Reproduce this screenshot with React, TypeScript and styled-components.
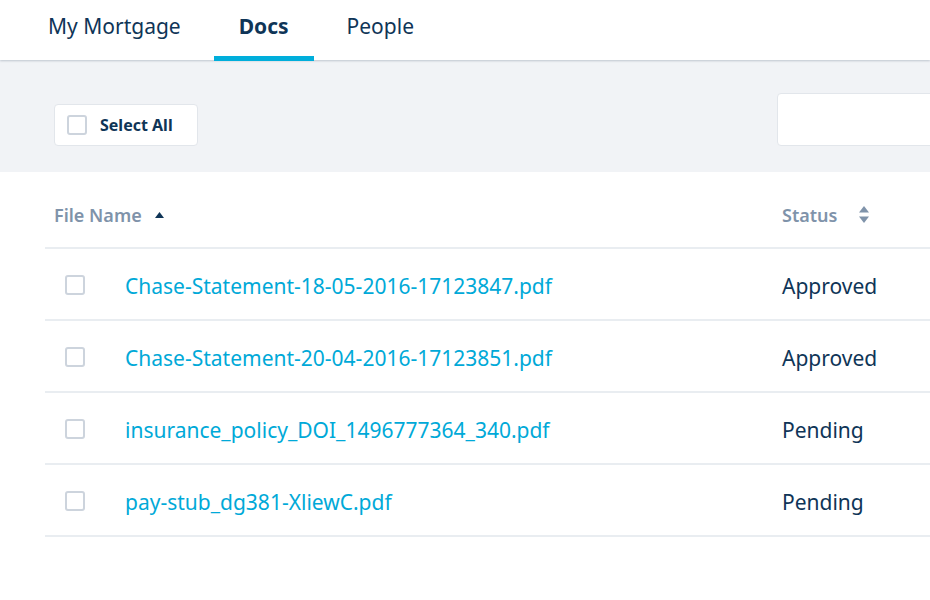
import React, { useState } from 'react';
import styled, { createGlobalStyle } from 'styled-components';

const GlobalStyle = createGlobalStyle`
  html, body {
    margin: 0;
    padding: 0;
    background: #ffffff;
    font-family: 'Noto Sans', 'Open Sans', sans-serif;
    overflow: hidden;
  }
`;

const docs = [
  { name: 'Chase-Statement-18-05-2016-17123847.pdf', status: 'Approved' },
  { name: 'Chase-Statement-20-04-2016-17123851.pdf', status: 'Approved' },
  { name: 'insurance_policy_DOI_1496777364_340.pdf', status: 'Pending' },
  { name: 'pay-stub_dg381-XliewC.pdf', status: 'Pending' },
];

const tabs = ['My Mortgage', 'Docs', 'People'];

const App: React.FC = () => {
  const [active, setActive] = useState('Docs');
  const [checked, setChecked] = useState<string[]>([]);

  const toggle = (name: string) => {
    setChecked((c) => (c.includes(name) ? c.filter((n) => n !== name) : [...c, name]));
  };

  const allChecked = checked.length === docs.length;

  return (
    <Page>
      <GlobalStyle />
      <Header>
        {tabs.map((tab) => (
          <Tab key={tab} active={tab === active} onClick={() => setActive(tab)}>
            {tab}
          </Tab>
        ))}
      </Header>
      <Toolbar>
        <SelectAll onClick={() => setChecked(allChecked ? [] : docs.map((d) => d.name))}>
          <Box checked={allChecked} />
          Select All
        </SelectAll>
        <Search type="text" />
      </Toolbar>
      <Table>
        <HeadRow>
          <NameHead>
            File Name
            <svg width="9" height="6" viewBox="0 0 9 6">
              <path d="M4.5 0 L9 6 L0 6 Z" fill="#0f3557" />
            </svg>
          </NameHead>
          <StatusHead>
            Status
            <svg width="10" height="17" viewBox="0 0 10 17">
              <path d="M5 0 L10 6.5 L0 6.5 Z" fill="#7f93aa" />
              <path d="M5 17 L10 10.5 L0 10.5 Z" fill="#7f93aa" />
            </svg>
          </StatusHead>
        </HeadRow>
        {docs.map((doc) => (
          <Row key={doc.name}>
            <CheckCell>
              <Box checked={checked.includes(doc.name)} onClick={() => toggle(doc.name)} />
            </CheckCell>
            <FileLink href="#">{doc.name}</FileLink>
            <Status>{doc.status}</Status>
          </Row>
        ))}
      </Table>
    </Page>
  );
};

const Page = styled.div`
  width: 930px;
  height: 600px;
  background: #ffffff;
`;

const Header = styled.div`
  display: flex;
  gap: 8px;
  height: 60px;
  padding-left: 23px;
  background: #ffffff;
  box-shadow: 0 1px 2px rgba(40, 60, 90, 0.25);
  position: relative;
  z-index: 1;
`;

const Tab = styled.div<{ active?: boolean }>`
  display: flex;
  align-items: center;
  box-sizing: border-box;
  height: 61px;
  padding: 0 25px 4px;
  font-size: 21px;
  line-height: 26px;
  color: #0f3557;
  font-weight: ${(p) => (p.active ? 700 : 400)};
  border-bottom: 5px solid ${(p) => (p.active ? '#00aedb' : 'transparent')};
  cursor: pointer;
`;

const Toolbar = styled.div`
  display: flex;
  align-items: flex-end;
  justify-content: space-between;
  box-sizing: border-box;
  height: 112px;
  padding: 0 0 26px 54px;
  background: #f1f3f6;
`;

const SelectAll = styled.div`
  display: flex;
  align-items: center;
  gap: 13px;
  box-sizing: border-box;
  height: 42px;
  width: 144px;
  padding: 0 12px;
  background: #ffffff;
  border: 1px solid #e2e6eb;
  border-radius: 4px;
  font-size: 16px;
  font-weight: 700;
  color: #0f3557;
  cursor: pointer;
`;

const Box = styled.span<{ checked?: boolean }>`
  display: inline-block;
  flex-shrink: 0;
  box-sizing: border-box;
  width: 20px;
  height: 20px;
  border: 2px solid #cdd4dd;
  border-radius: 3px;
  background: ${(p) => (p.checked ? '#00aedb' : '#ffffff')};
  cursor: pointer;
`;

const Search = styled.input`
  box-sizing: border-box;
  width: 170px;
  height: 53px;
  margin-right: -17px;
  border: 1px solid #e2e6eb;
  border-radius: 4px;
  background: #ffffff;
  outline: none;
`;

const Table = styled.div`
  margin-left: 45px;
`;

const HeadRow = styled.div`
  display: flex;
  align-items: center;
  box-sizing: border-box;
  height: 77px;
  padding-top: 10px;
  border-bottom: 2px solid #e9edf1;
  font-size: 18px;
  line-height: 22px;
  font-weight: 600;
  color: #7f93aa;
`;

const NameHead = styled.div`
  display: flex;
  align-items: center;
  gap: 13px;
  width: 728px;
  padding-left: 9px;
  box-sizing: border-box;
`;

const StatusHead = styled.div`
  display: flex;
  align-items: center;
  gap: 22px;
  padding-left: 9px;
`;

const Row = styled.div`
  display: flex;
  align-items: center;
  box-sizing: border-box;
  height: 72px;
  padding-top: 3px;
  border-bottom: 2px solid #e9edf1;
`;

const CheckCell = styled.div`
  display: flex;
  width: 80px;
  padding-left: 20px;
  padding-bottom: 2px;
  box-sizing: border-box;
`;

const FileLink = styled.a`
  width: 657px;
  font-size: 21px;
  line-height: 26px;
  color: #00a9d8;
  text-decoration: none;
`;

const Status = styled.div`
  font-size: 21px;
  line-height: 26px;
  color: #0f3557;
`;

export default App;
